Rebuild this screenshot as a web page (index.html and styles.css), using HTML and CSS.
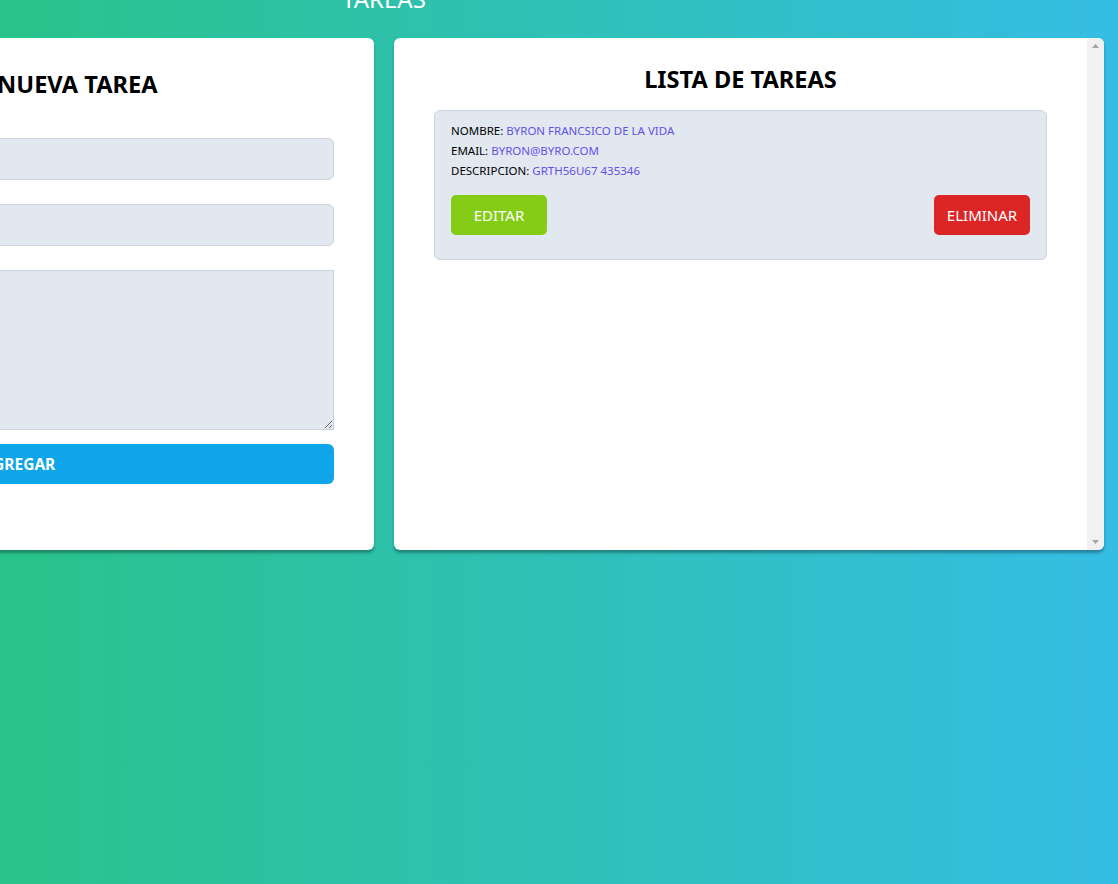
FILE: index.html
```html
<!DOCTYPE html>
<html lang="es">
<head>
<meta charset="utf-8">
<title>Tareas</title>
<link rel="stylesheet" href="styles.css">
</head>
<body>
<div class="app">
  <h1 class="title">TAREAS</h1>
  <div class="columns">
    <section class="card form-card">
      <h2 class="card-title form-title">AGREGAR NUEVA TAREA</h2>
      <form class="form">
        <input class="field" type="text" placeholder="">
        <input class="field" type="text" placeholder="">
        <textarea class="field area"></textarea>
        <button type="button" class="btn-add">AGREGAR</button>
      </form>
    </section>
    <section class="card list-card">
      <div class="list-content">
        <h2 class="card-title list-title">LISTA DE TAREAS</h2>
        <div class="task">
          <p class="line">NOMBRE: <span class="val">BYRON FRANCSICO DE LA VIDA</span></p>
          <p class="line">EMAIL: <span class="val">BYRON@BYRO.COM</span></p>
          <p class="line">DESCRIPCION: <span class="val">GRTH56U67 435346</span></p>
          <div class="actions">
            <button type="button" class="btn btn-edit">EDITAR</button>
            <button type="button" class="btn btn-del">ELIMINAR</button>
          </div>
        </div>
      </div>
      <div class="scrollbar">
        <svg width="17" height="17" viewBox="0 0 17 17"><polygon points="5,10 12,10 8.5,6" fill="#a3a3a3"/></svg>
        <svg width="17" height="17" viewBox="0 0 17 17"><polygon points="5,7 12,7 8.5,11" fill="#a3a3a3"/></svg>
      </div>
    </section>
  </div>
</div>
</body>
</html>
```
FILE: styles.css
```css
html, body {
  margin: 0;
  padding: 0;
}
body {
  min-height: 100vh;
  overflow: hidden;
  background: linear-gradient(to right, #29c38a, #36bde4);
  font-family: "Noto Sans", "Open Sans", sans-serif;
}
.app {
  width: 1440px;
  margin-left: -336px;
}
.title {
  margin: -17px 0 23px;
  text-align: center;
  color: #fff;
  font-size: 24px;
  line-height: 32px;
  font-weight: 400;
}
.columns {
  display: grid;
  grid-template-columns: 710px 710px;
  gap: 20px;
}
.card {
  background: #fff;
  border-radius: 6px;
  height: 512px;
  box-sizing: border-box;
  box-shadow: 0 3px 3px rgba(0, 0, 0, 0.3);
}
.card-title {
  margin: 0;
  text-align: center;
  font-size: 23.6px;
  line-height: 32px;
  font-weight: 700;
  color: #000;
}
.form-card {
  padding: 30px 40px 0;
}
.form-title {
  margin-bottom: 38px;
}
.form {
  display: flex;
  flex-direction: column;
}
.field {
  display: block;
  box-sizing: border-box;
  width: 100%;
  height: 42px;
  margin: 0 0 24px;
  background: #e2e8f0;
  border: 1px solid #cbd5e1;
  border-radius: 6px;
  font: inherit;
}
.area {
  height: 160px;
  margin-bottom: 14px;
  border-radius: 0;
  resize: vertical;
}
.btn-add {
  height: 40px;
  border: 0;
  border-radius: 6px;
  background: #0ea5e9;
  color: #fff;
  font-family: inherit;
  font-size: 15.5px;
  font-weight: 700;
}
.list-card {
  display: flex;
  overflow: hidden;
}
.list-content {
  flex: 1;
  padding: 25px 40px 0;
}
.list-title {
  margin-bottom: 15px;
}
.task {
  background: #e2e8f0;
  border: 1px solid #cbd5e1;
  border-radius: 6px;
  padding: 10px 16px 24px;
}
.line {
  margin: 0;
  font-size: 11.5px;
  line-height: 20px;
  color: #000;
}
.val {
  color: #6350e8;
}
.actions {
  display: flex;
  justify-content: space-between;
  margin-top: 14px;
}
.btn {
  width: 96px;
  height: 40px;
  border: 0;
  border-radius: 5px;
  color: #fff;
  font-family: inherit;
  font-size: 15px;
}
.btn-edit {
  background: #84cc16;
}
.btn-del {
  background: #dc2626;
}
.scrollbar {
  width: 17px;
  background: #f1f1f1;
  display: flex;
  flex-direction: column;
  justify-content: space-between;
}
.scrollbar svg {
  display: block;
}
```
